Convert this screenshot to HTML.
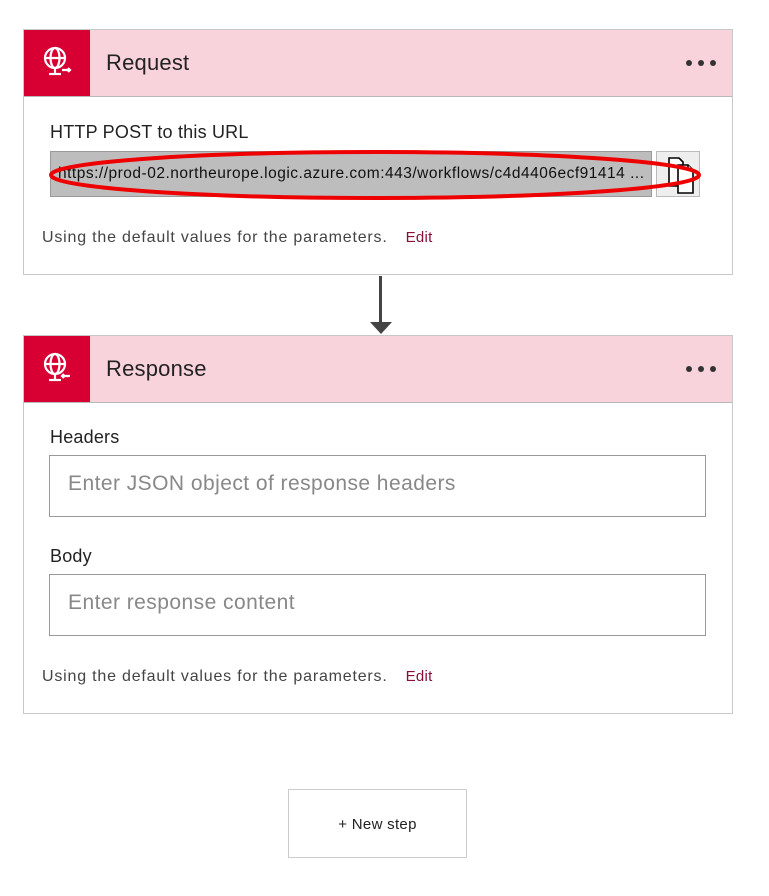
<!DOCTYPE html>
<html><head><style>
body{margin:0;width:769px;height:896px;background:#fff;font-family:"Liberation Sans",sans-serif;position:relative;overflow:hidden}
.card{position:absolute;left:23px;width:708px;border:1px solid #c8c8c8;background:#fff}
.hd{height:66px;background:#f8d3dc;border-bottom:1px solid #b9b9b9;position:relative}
.ic{position:absolute;left:0;top:0;width:66px;height:66px;background:#d80032}
.ttl{position:absolute;left:82px;top:20px;font-size:22px;color:#222;letter-spacing:0.2px}
.dots{position:absolute;right:16px;top:29px;line-height:6px}
.dots i{display:inline-block;width:6px;height:6px;border-radius:50%;background:#333;margin-left:6px}
.lbl{position:absolute;left:26px;font-size:18px;color:#222;letter-spacing:0.2px}
.ft{position:absolute;left:18px;font-size:16px;color:#444;letter-spacing:0.8px}
.ft span{color:#8a0e3a;margin-left:18px;font-size:15px;letter-spacing:0.3px}
.inp{position:absolute;left:25px;width:657px;height:62px;border:1px solid #999;box-sizing:border-box;font-size:21px;color:#888;padding:16px 18px;letter-spacing:0.45px}
</style></head><body>
<div class="card" style="top:29px;height:244px">
 <div class="hd"><div class="ic"><svg width="66" height="66" viewBox="0 0 66 66" fill="none" stroke="#fff" stroke-width="2.2"><circle cx="31" cy="28" r="10"/><ellipse cx="31" cy="28" rx="4.5" ry="10"/><line x1="21" y1="28" x2="41" y2="28"/><line x1="31" y1="38" x2="31" y2="43"/><line x1="25" y1="44" x2="37" y2="44"/><path d="M38 40h8M44 38l2 2-2 2"/></svg></div><div class="ttl">Request</div><div class="dots"><i></i><i></i><i></i></div></div>
 <div class="lbl" style="top:92px">HTTP POST to this URL</div>
 <div style="position:absolute;left:26px;top:121px;width:602px;height:46px;background:#bdbdbd;border:1px solid #999;box-sizing:border-box;font-size:15.5px;color:#111;padding:13px 7px;white-space:nowrap;overflow:hidden;letter-spacing:0.5px">https://prod-02.northeurope.logic.azure.com:443/workflows/c4d4406ecf91414 ...</div>
 <div style="position:absolute;left:632px;top:121px;width:44px;height:46px;background:#eee;border:1px solid #bbb;box-sizing:border-box"><svg width="44" height="46" viewBox="0 0 44 46" fill="#fff" stroke="#000" stroke-width="1.6"><path d="M12 6h10l4 4v24H12z"/><path d="M21 13h10l5 5v23H21z"/><path d="M31 13v5h5"/></svg></div>
 <svg style="position:absolute;left:20px;top:115px" width="664" height="62"><ellipse cx="331" cy="30" rx="324" ry="23" fill="none" stroke="#e00" stroke-width="4"/></svg>
 <div class="ft" style="top:199px">Using the default values for the parameters.<span>Edit</span></div>
</div>
<div style="position:absolute;left:379px;top:276px;width:3px;height:48px;background:#444"></div>
<div style="position:absolute;left:370px;top:322px;width:0;height:0;border-left:11px solid transparent;border-right:11px solid transparent;border-top:12px solid #444"></div>
<div class="card" style="top:335px;height:377px">
 <div class="hd"><div class="ic"><svg width="66" height="66" viewBox="0 0 66 66" fill="none" stroke="#fff" stroke-width="2.2"><circle cx="31" cy="28" r="10"/><ellipse cx="31" cy="28" rx="4.5" ry="10"/><line x1="21" y1="28" x2="41" y2="28"/><line x1="31" y1="38" x2="31" y2="43"/><line x1="25" y1="44" x2="37" y2="44"/><path d="M46 40h-8M40 38l-2 2 2 2"/></svg></div><div class="ttl">Response</div><div class="dots"><i></i><i></i><i></i></div></div>
 <div class="lbl" style="top:91px">Headers</div>
 <div class="inp" style="top:119px">Enter JSON object of response headers</div>
 <div class="lbl" style="top:210px">Body</div>
 <div class="inp" style="top:238px">Enter response content</div>
 <div class="ft" style="top:332px">Using the default values for the parameters.<span>Edit</span></div>
</div>
<div style="position:absolute;left:288px;top:789px;width:179px;height:69px;border:1px solid #ccc;box-sizing:border-box;text-align:center;line-height:69px;font-size:15px;color:#222;letter-spacing:0.3px">+ New step</div>
</body></html>
